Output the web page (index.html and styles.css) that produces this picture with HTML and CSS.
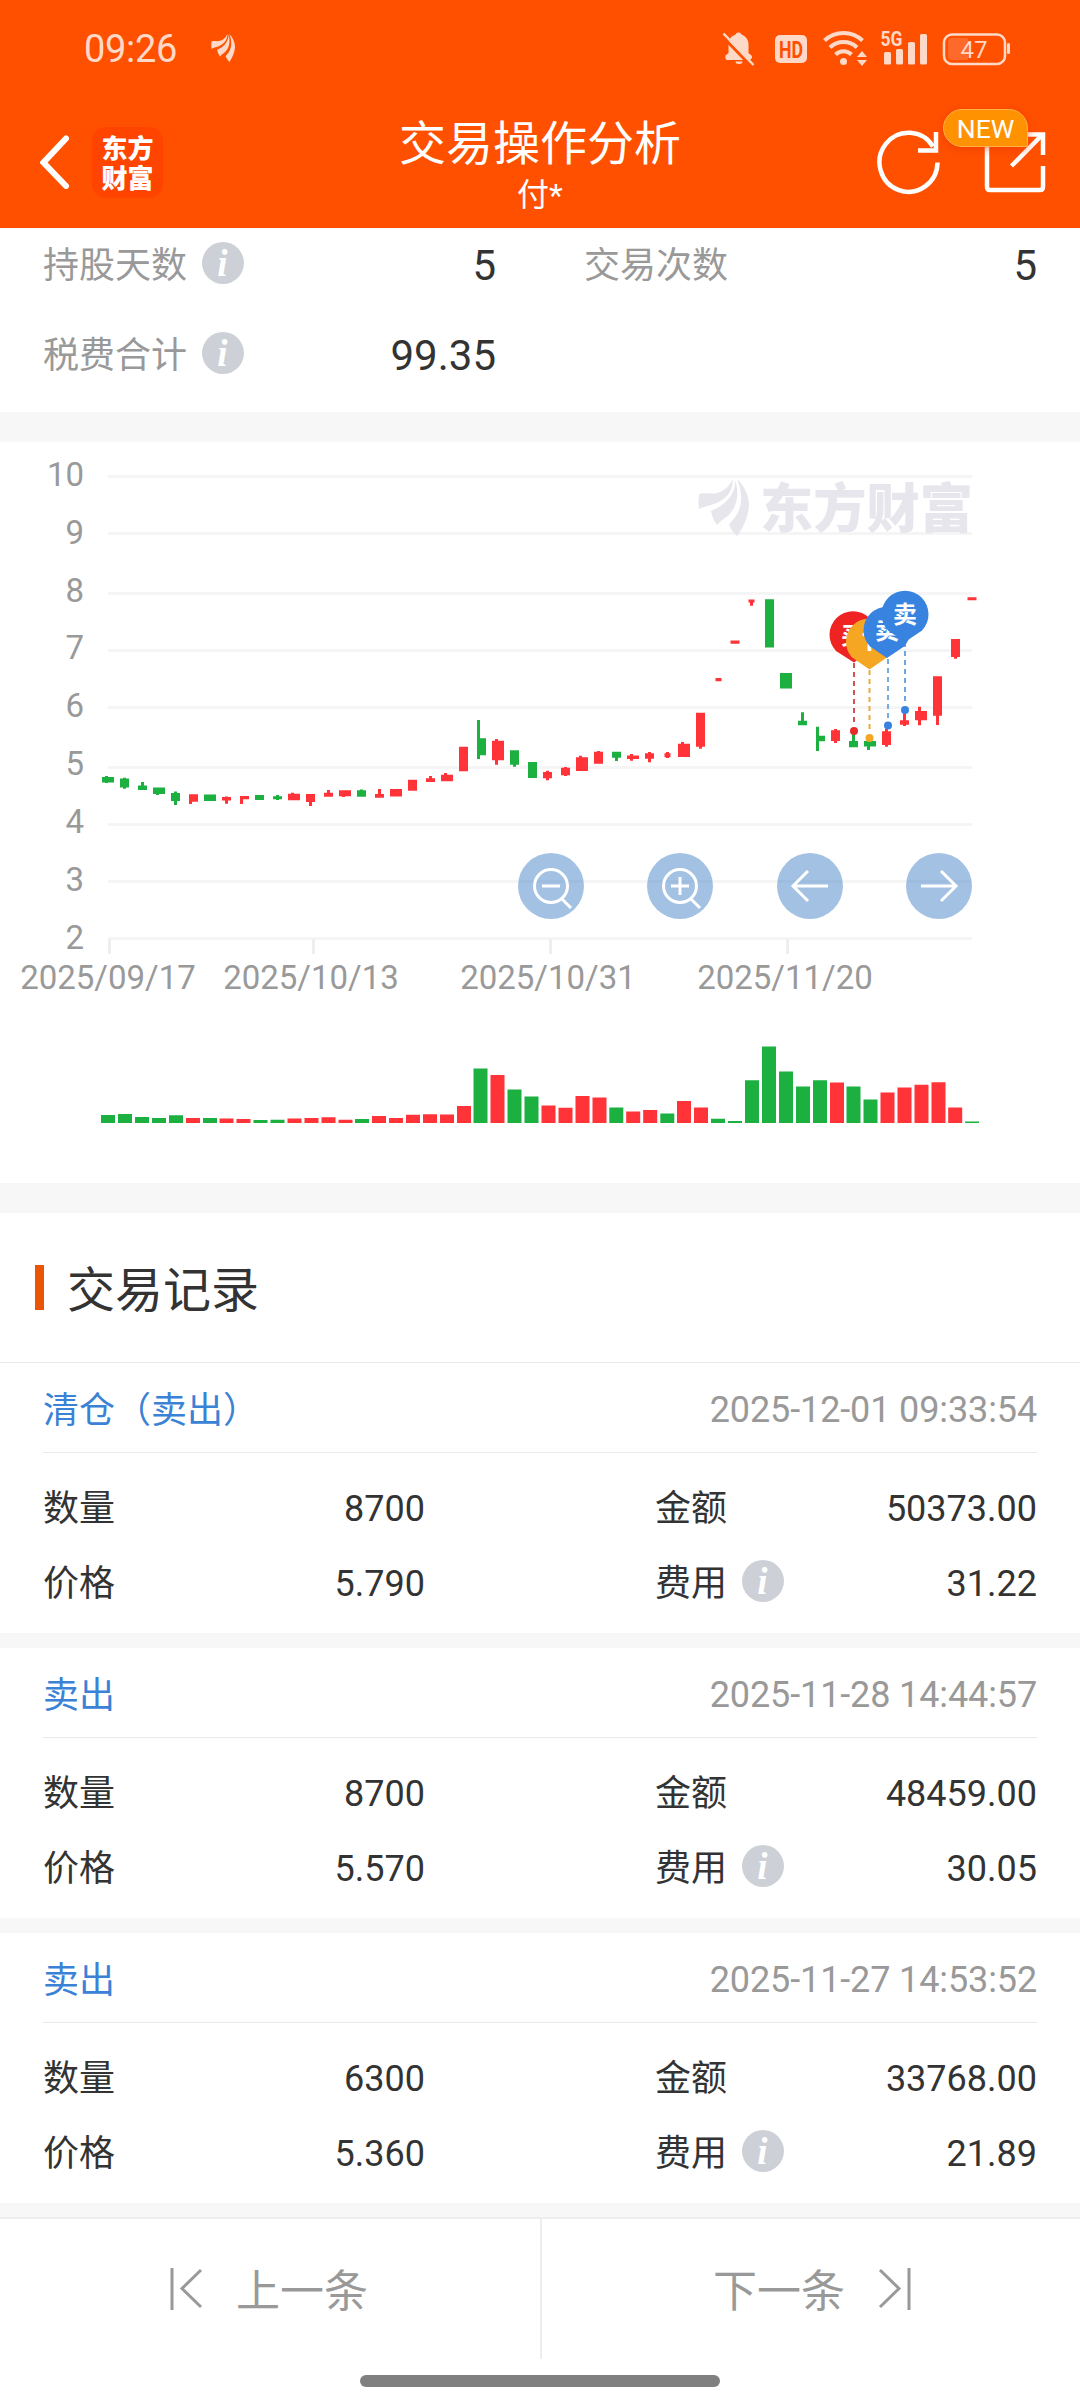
FILE: index.html
```html
<!DOCTYPE html>
<html lang="zh-CN">
<head>
<meta charset="utf-8">
<title>交易操作分析</title>
<link rel="stylesheet" href="styles.css">
</head>
<body>
<svg width="0" height="0" class="defs" aria-hidden="true">
  <symbol id="feather" viewBox="0 0 51 57" preserveAspectRatio="none">
    <path d="M35 0C31 8 25 13 17 14.500C9 15 3 13 1 16Q0 22 1 30Q5 28 13 26C27 22 35 13 35 0Z"/>
    <path d="M37 1C38 17 25 27 13 32Q14 39 19 46Q22 42 27 39C39 31 42 15 37 1Z"/>
    <path d="M39 0C47 7 51 18 51 27C50 39 45 49 39 57Q33 52 31 45C41 36 48 22 39 0Z"/>
  </symbol>
  <symbol id="info" viewBox="0 0 42 42">
    <circle cx="21" cy="21" r="21" fill="#cdd0d6"/>
    <text x="20.500" y="34" class="info-i">i</text>
  </symbol>
</svg>

<header class="header">
  <div class="status">
    <span class="clock">09:26</span>
    <svg class="status-logo" width="24" height="28"><use href="#feather"/></svg>
    <svg class="status-icons" width="292" height="40" viewBox="720 28 292 40">
      <path d="M738.500 32.500a3 3 0 0 1 3 2c4 1.500 7 5 7 10v8.500l3.500 3v2l-2 2h-23.500q-2-2-1-4.500l3-2.500v-9c0-5 3-8 7-9.500a3 3 0 0 1 3-2Z"/>
      <path d="M735.500 61.500h7a3.500 2.500 0 0 1-7 0Z"/>
      <path d="M722 36 751 66" class="cut"/>
      <path d="M723.500 33.500 753.500 65" class="slash"/>
      <rect x="775" y="35" width="32" height="28" rx="5"/>
      <text x="791" y="57.500" class="hd" textLength="24" lengthAdjust="spacingAndGlyphs">HD</text>
      <g class="arc">
        <path d="M824.500 40.500a27.500 27.500 0 0 1 38 0"/>
        <path d="M830 47.500a19.500 19.500 0 0 1 27 0"/>
        <path d="M835.500 54.500a11.500 11.500 0 0 1 16 0"/>
      </g>
      <circle cx="843.500" cy="61.500" r="3.500"/>
      <path d="M857 57l5-6 5 6zM857 60l5 6 5-6z"/>
      <text x="880.500" y="46" class="g5" textLength="22" lengthAdjust="spacingAndGlyphs">5G</text>
      <rect x="884" y="52" width="7" height="12.500" rx="1.500"/>
      <rect x="896" y="49" width="7" height="15.500" rx="1.500"/>
      <rect x="908" y="42" width="7" height="22.500" rx="1.500"/>
      <rect x="920" y="34" width="7" height="30.500" rx="1.500"/>
      <rect x="944" y="34.500" width="61" height="29.500" rx="8" class="cell"/>
      <path d="M952 38h16v22h-16q-4 0-4-4v-14q0-4 4-4Z" fill="#ff6a2b"/>
      <rect x="1007" y="43" width="3" height="11" rx="1.500"/>
      <text x="974" y="57.500" class="level">47</text>
    </svg>
  </div>
  <nav class="nav">
    <div class="nav-left">
      <svg width="30" height="54" viewBox="0 0 30 54"><path d="M26 3.500 3.500 27.500 26 51" fill="none" stroke="#fff" stroke-width="6" stroke-linecap="round"/></svg>
      <div class="brand"><span>东方</span><span>财富</span></div>
    </div>
    <div class="nav-title">
      <h1>交易操作分析</h1>
      <p>付*</p>
    </div>
    <div class="nav-right">
      <svg width="170" height="66" viewBox="877 129 170 66" fill="none" stroke="#fff" stroke-width="4.500">
        <path d="M937.500 162.500A29 29.500 0 1 1 933 146.500"/>
        <path d="M936 132v18.500h-18"/>
        <path d="M987 134v53q0 3 3 3h50q3 0 3-3v-21"/>
        <path d="M1000 134.500h43v20.500"/>
        <path d="M1011.500 166 1042 135"/>
      </svg>
      <span class="badge">NEW</span>
    </div>
  </nav>
</header>

<section class="summary">
  <div class="stat"><span>持股天数</span><svg width="42" height="42"><use href="#info"/></svg><b>5</b></div>
  <div class="stat"><span>交易次数</span><b>5</b></div>
  <div class="stat"><span>税费合计</span><svg width="42" height="42"><use href="#info"/></svg><b>99.35</b></div>
</section>

<section class="chart">
  <svg width="1080" height="741" viewBox="0 442 1080 741">
    <path class="grid" d="M108 476.500H972M108 533.500H972M108 593.500H972M108 650.500H972M108 707.500H972M108 767.500H972M108 824.500H972M108 881.500H972M108 938.500H972"/>
    <path class="tick" d="M109.500 939v15M313.500 939v15M550.500 939v15M787.500 939v15"/>
    <g class="axis axis-y">
      <text x="84" y="486">10</text><text x="84" y="543.500">9</text><text x="84" y="601.500">8</text>
      <text x="84" y="659">7</text><text x="84" y="717">6</text><text x="84" y="775">5</text>
      <text x="84" y="833">4</text><text x="84" y="890.500">3</text><text x="84" y="948.500">2</text>
    </g>
    <g class="axis axis-x">
      <text x="108" y="989">2025/09/17</text><text x="311" y="989">2025/10/13</text>
      <text x="548" y="989">2025/10/31</text><text x="785" y="989">2025/11/20</text>
    </g>
    <g class="watermark">
      <use href="#feather" x="698" y="479" width="51" height="57"/>
      <text x="760" y="527.500" textLength="213" lengthAdjust="spacingAndGlyphs">东方财富</text>
    </g>

    <!-- candle bodies: wide, normal, narrow; then wicks -->
    <g class="down">
      <path class="w12" d="M108 777v5.500M159 787.500v6.500M210 794.500v6.500M786 673v15.500M870 741v5.500"/>
      <path class="w9" d="M124.500 778.500v9M142.500 785.500v4.500M175.500 793v8M259.500 795v5M277.500 796.300v3M361.500 790.300v6.400M481.500 738.300v17M514.500 750.300v14.400M532.500 762v16M616.500 751.700v6M769.500 599.300v48.200M802.500 720.700v4.500M820.500 735.700v5.600M853.500 741v6.300"/>
      <path class="w3" d="M106.500 776v7M124.500 777.700v11M142.500 782v6M157.500 788v7M175.500 791.500v13.500M277.500 795v5M361.500 789.500v5M478.500 720v39M514.500 756v10.700M616.500 753v8M802.500 712.300v10M817.500 726.700v24.300M853.500 733v10M868.500 742v8"/>
    </g>
    <g class="up">
      <path class="w12" d="M294 793.700v6.600M345 790.300v6M396 789v7.500M447 774.700v6.600M498 740.700v19.600M582 757.300v13.700M633 755.500v3.500M684 743.700v13.300M921 711v9.300"/>
      <path class="w9" d="M193.500 794.300v7.400M226.500 797v3.500M244.500 796v3.300M310.500 794v8M328.500 792.700v4M379.500 794v3.700M412.500 779.700v11M430.500 778.300v3.700M463.500 746.700v24.500M547.500 772v6.300M565.500 767.700v7.500M598.500 751.700v12M649.500 753.300v5.500M700.500 712.700v34M735 640.500v3.300M835.500 730.300v10.700M886.500 731.300v13.700M904.500 720.300v4.400M937.500 676.300v39.500M955.500 639v18M972 597.300v3"/>
      <path class="w6" d="M667.500 753.300v4M718.500 678v3.300M751.500 599.500v3"/>
      <path class="w3" d="M190.500 796v8M226.500 796.500v7.200M241.500 796v8M292.500 792.700v5M310.500 800v6M328.500 790v5M343.500 794v3M379.500 789v7M430.500 776v4M445.500 773v4M496.500 739v25.700M547.500 770.700v9.600M565.500 767v9M580.500 755.700v5M598.500 751v5M631.500 754v6.700M649.500 752v10.300M667.500 752v6M682.500 742v5M700.500 740v8.700M751.500 600v5.700M835.500 729v14M886.500 729v17.700M904.500 713v13M919.500 706.700v18.600M937.500 710v15M955.500 650v8.700"/>
    </g>

    <!-- trade pins -->
    <g class="lead">
      <path d="M854 663v62" stroke="#d2504f"/><path d="M869.500 670v62" stroke="#e8ac3c"/>
      <path d="M888 659v60" stroke="#77aadd"/><path d="M905 642v62" stroke="#6ea5e3"/>
    </g>
    <circle cx="854" cy="731" r="4" fill="#e62b2b"/><circle cx="869.500" cy="738" r="4" fill="#f2a725"/>
    <circle cx="888" cy="725.500" r="4" fill="#3883e0"/><circle cx="905" cy="710" r="4" fill="#3883e0"/>
    <g class="pin">
      <g transform="translate(853 635)"><path d="M-17 16A23.500 23.500 0 1 1 17 16L1 27.500Z" fill="#f02323"/><text y="8.500">买</text></g>
      <g transform="translate(869.500 642)"><path d="M-18 15A23.500 23.500 0 1 1 18 15L0 27.500Z" fill="#f5a623"/><text y="8.500">T</text></g>
      <g transform="translate(887 630.500)"><path d="M-17 16A23.500 23.500 0 1 1 17 16L0 27.500Z" fill="#3883e0"/><text y="8.500">卖</text></g>
      <g transform="translate(905 614.500)"><path d="M-17 16A23.500 23.500 0 1 1 17 16L0 27.500Z" fill="#3883e0"/><text y="8.500">卖</text></g>
    </g>

    <!-- volume -->
    <path class="down w14" d="M108 1123v-8M125 1123v-9M142 1123v-6M159 1123v-5M176 1123v-7.700M210 1123v-5M260.500 1123v-3M277.500 1123v-3.300M362 1123v-4M480.500 1123v-54.500M514.500 1123v-33.500M531.500 1123v-26.500M616.300 1123v-15.500M667.300 1123v-9.500M718 1123v-4.300M735 1123v-2M752 1123v-42.700M769 1123v-76.500M786 1123v-51.500M803 1123v-36.500M820 1123v-42.700M853.500 1123v-36.500M870.500 1123v-23.500M972 1123v-1.500"/>
    <path class="up w14" d="M193 1123v-5M226.500 1123v-4.500M243.500 1123v-4M294.500 1123v-4.500M311.500 1123v-5M328.500 1123v-5.700M345.500 1123v-3.300M379 1123v-7M396 1123v-5M413 1123v-8.300M430 1123v-8.700M447 1123v-8.500M464 1123v-17M497.500 1123v-48M548.500 1123v-17.500M565.500 1123v-15.300M582.500 1123v-27M599.500 1123v-25.500M633.200 1123v-11.500M650.200 1123v-13M684 1123v-22M701 1123v-15.500M837 1123v-40.500M887.500 1123v-30.500M904.500 1123v-35.500M921.500 1123v-38.300M938.500 1123v-40.700M955.200 1123v-15.500"/>
  </svg>
  <div class="tools">
    <button><svg viewBox="-33 -33 66 66"><circle r="16.500"/><path d="M-9 0H9M11 13l9 9"/></svg></button>
    <button><svg viewBox="-33 -33 66 66"><circle r="16.500"/><path d="M-9 0H9M0-9V9M11 13l9 9"/></svg></button>
    <button><svg viewBox="-33 -33 66 66"><path d="M18 0H-17M-2-15-17 0-2 15"/></svg></button>
    <button><svg viewBox="-33 -33 66 66"><path d="M-18 0H17M2-15 17 0 2 15"/></svg></button>
  </div>
</section>

<main class="records">
  <h2>交易记录</h2>
  <article class="record">
    <header><span>清仓（卖出）</span><time>2025-12-01 09:33:54</time></header>
    <dl>
      <dt>数量</dt><dd>8700</dd><dt>金额</dt><dd>50373.00</dd>
      <dt>价格</dt><dd>5.790</dd><dt>费用<svg width="42" height="42"><use href="#info"/></svg></dt><dd>31.22</dd>
    </dl>
  </article>
  <article class="record">
    <header><span>卖出</span><time>2025-11-28 14:44:57</time></header>
    <dl>
      <dt>数量</dt><dd>8700</dd><dt>金额</dt><dd>48459.00</dd>
      <dt>价格</dt><dd>5.570</dd><dt>费用<svg width="42" height="42"><use href="#info"/></svg></dt><dd>30.05</dd>
    </dl>
  </article>
  <article class="record">
    <header><span>卖出</span><time>2025-11-27 14:53:52</time></header>
    <dl>
      <dt>数量</dt><dd>6300</dd><dt>金额</dt><dd>33768.00</dd>
      <dt>价格</dt><dd>5.360</dd><dt>费用<svg width="42" height="42"><use href="#info"/></svg></dt><dd>21.89</dd>
    </dl>
  </article>
</main>

<footer class="footer">
  <div class="pager">
    <a class="prev"><svg width="34" height="42" viewBox="0 0 34 42"><path d="M2 0v42M31 2 12 20.500 31 39"/></svg><span>上一条</span></a>
    <a class="next"><span>下一条</span><svg width="34" height="42" viewBox="0 0 34 42"><path d="M32 0v42M3 2 22 20.500 3 39"/></svg></a>
  </div>
  <div class="home"></div>
</footer>
</body>
</html>
```
FILE: styles.css
```css
* { box-sizing: border-box; margin: 0; padding: 0; }
body {
  width: 1080px;
  height: 2408px;
  overflow: hidden;
  background: #f7f7f7;
  color: #333;
  font: 36px/48px Roboto, "Noto Sans CJK SC", sans-serif;
}
svg { display: block; flex: none; }
.defs { display: none; }
.info-i { font: italic bold 37px "Liberation Serif", serif; fill: #fff; text-anchor: middle; }

/* header */
.header { height: 228px; background: #ff5000; color: #fff; }
.status { display: flex; align-items: center; height: 96px; padding: 0 68px 0 84px; color: #ffd9c8; }
.clock { width: 127px; font-size: 38px; letter-spacing: -.3px; padding-top: 2px; }
.status-logo { fill: #ffd9c8; }
.status-icons { margin-left: auto; fill: #ffd9c8; }
.cut { stroke: #ff5000; stroke-width: 3; }
.slash { stroke: #ffd9c8; stroke-width: 2.5; }
.arc { fill: none; stroke: #ffd9c8; stroke-width: 4; }
.hd { font: bold 23px Roboto, sans-serif; fill: #ff5000; text-anchor: middle; }
.g5 { font: bold 20px Roboto, sans-serif; }
.cell { fill: none; stroke: #ffd9c8; stroke-width: 2.5; }
.level { font: 24px Roboto, sans-serif; text-anchor: middle; }

.nav { display: grid; grid-template-columns: 1fr auto 1fr; height: 132px; }
.nav-left { display: flex; align-items: center; gap: 22px; padding-left: 40px; }
.brand {
  display: grid; align-content: center; justify-items: center;
  width: 71px; height: 71px; border-radius: 14px; background: #ff4400;
  font: 900 26px/30px "Noto Sans CJK SC", sans-serif;
}
.nav-title { padding-top: 22px; text-align: center; }
.nav-title h1 { font-size: 47px; font-weight: 400; line-height: 52px; }
.nav-title p { margin-top: 5px; font-size: 32px; line-height: 40px; }
.nav-right { position: relative; display: flex; align-items: center; justify-content: flex-end; padding-right: 33px; }
.badge {
  position: absolute; right: 52px; top: 13px; width: 85px; height: 38px;
  border: 1px solid #ffb04a; border-radius: 19px 19px 0 19px; background: #ff9200;
  box-shadow: 0 2px 8px rgba(230, 50, 0, .5);
  font-size: 26.5px; line-height: 38px; text-align: center;
}

/* summary */
.summary {
  display: grid; grid-template-columns: 453px 453px; grid-auto-rows: 60px; gap: 30px 88px;
  height: 184px; padding: 8px 43px 0; background: #fff;
}
.stat { display: flex; align-items: center; color: #999; }
.stat svg { margin: -6px 0 0 15px; }
.stat b { margin-left: auto; color: #333; font-size: 42px; font-weight: 400; }

/* chart */
.chart { position: relative; height: 741px; margin-top: 30px; background: #fff; }
.grid { stroke: #f5f5f5; stroke-width: 3; }
.tick { stroke: #eee; stroke-width: 3; }
.axis { font-size: 33px; fill: #999; }
.axis-y { text-anchor: end; }
.axis-x { text-anchor: middle; }
.watermark { fill: #e7e6ec; font: 900 53px "Noto Sans CJK SC", sans-serif; }
.down { stroke: #1bb040; }
.up { stroke: #ff3338; }
.w3 { stroke-width: 3; }
.w6 { stroke-width: 6; }
.w9 { stroke-width: 9; }
.w12 { stroke-width: 12; }
.w14 { stroke-width: 14; }
.lead { stroke-width: 2; stroke-dasharray: 5 4; }
.pin { fill: #fff; font: bold 24px "Noto Sans CJK SC", sans-serif; text-anchor: middle; }
.tools { position: absolute; left: 518px; top: 411px; display: flex; justify-content: space-between; width: 454px; }
.tools button { width: 66px; height: 66px; border: 0; border-radius: 50%; background: rgba(72, 131, 200, .5); }
.tools svg { width: 66px; height: 66px; fill: none; stroke: #fff; stroke-width: 3; }

/* records */
.records { margin-top: 30px; }
.records h2 {
  display: flex; align-items: center; height: 150px; padding: 6px 35px 0; background: #fff;
  border-bottom: 1px solid #e9e9e9; font-size: 48px; font-weight: 400;
}
.records h2::before { content: ""; width: 9px; height: 45px; margin: -6px 23px 0 0; background: #e95504; }
.record { height: 270px; padding: 0 43px; background: #fff; }
.record + .record { margin-top: 15px; }
.record header {
  display: flex; align-items: center; justify-content: space-between;
  height: 90px; padding-top: 5px; border-bottom: 1px solid #ebebeb;
}
.record span { padding-top: 2px; color: #3a82d6; }
.record time { color: #999; letter-spacing: -.12px; }
.record dl {
  display: grid; grid-template-columns: 191px 191px 305px 307px;
  grid-auto-rows: 75px; align-items: center; padding-top: 18px;
}
.record dt { display: flex; align-items: center; }
.record dt:nth-of-type(even) { padding-left: 230px; white-space: nowrap; }
.record dt svg { margin: -5px 0 0 15px; }
.record dd { text-align: right; }

/* footer */
.footer { height: 191px; margin-top: 14px; border-top: 2px solid #ededed; background: #fff; }
.pager { display: grid; grid-template-columns: 542px 538px; height: 140px; color: #999; font-size: 44px; }
.pager a { display: flex; align-items: center; }
.pager span { padding-top: 5px; }
.pager svg { margin-top: -1px; fill: none; stroke: #999; stroke-width: 3; }
.prev { gap: 32px; padding-left: 170px; border-right: 2px solid #ededed; }
.next { gap: 32px; padding-left: 171px; }
.home { width: 360px; height: 12px; margin: 16px auto 0; border-radius: 6px; background: #808080; }
```
